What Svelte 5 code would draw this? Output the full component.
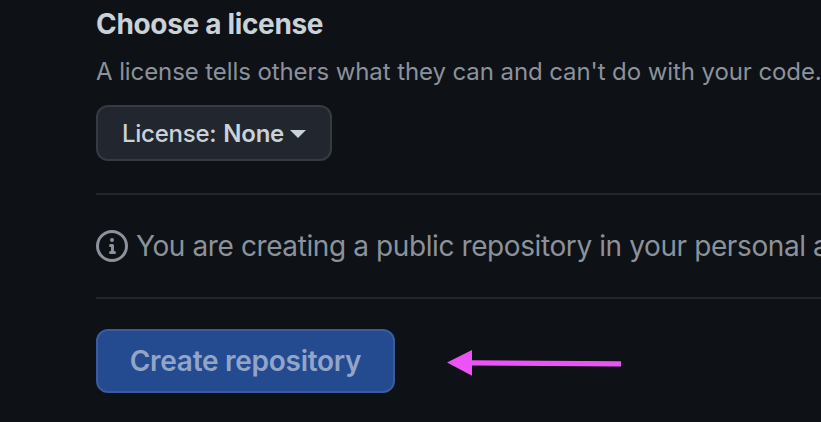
<script>
  const license = 'None';
</script>

<main>
  <section class="license">
    <h2>Choose a license</h2>
    <p class="hint">A license tells others what they can and can't do with your code.</p>
    <button class="select">
      <span class="label">License:</span>
      <span class="value">{license}</span>
      <svg class="caret" width="16" height="8" viewBox="0 0 16 8" aria-hidden="true"><path d="M0 0h16L8 8z" /></svg>
    </button>
  </section>

  <div class="notice">
    <svg width="32" height="32" viewBox="0 0 16 16" aria-hidden="true">
      <path d="M0 8a8 8 0 1 1 16 0A8 8 0 0 1 0 8Zm8-6.5a6.5 6.5 0 1 0 0 13 6.5 6.5 0 0 0 0-13ZM6.5 7.75A.75.75 0 0 1 7.25 7h1a.75.75 0 0 1 .75.75v2.75h.25a.75.75 0 0 1 0 1.5h-2a.75.75 0 0 1 0-1.5h.25v-2h-.25a.75.75 0 0 1-.75-.75ZM8 6a1 1 0 1 1 0-2 1 1 0 0 1 0 2Z" />
    </svg>
    <p>You are creating a public repository in your personal a</p>
  </div>

  <div class="actions">
    <button class="create">Create repository</button>
    <svg class="arrow" width="176" height="28" viewBox="0 0 176 28" aria-hidden="true">
      <path d="M0 13.5 25 1v10.3l149 1v5.2l-149-1v10.3z" />
    </svg>
  </div>
</main>

<style>
  :global(body) {
    background: #0e1116;
    overflow: hidden;
  }
  main {
    box-sizing: border-box;
    width: 821px;
    height: 422px;
    padding-left: 96px;
    overflow: hidden;
    background: #0e1116;
    color: #c9d1d9;
    font-family: Inter, 'Liberation Sans', sans-serif;
    white-space: nowrap;
  }
  h2,
  p {
    margin: 0;
  }
  button {
    display: flex;
    align-items: center;
    box-sizing: border-box;
    margin: 0;
    font-family: inherit;
    color: inherit;
    border-radius: 12px;
  }
  .license {
    height: 193px;
  }
  h2 {
    height: 48px;
    font-size: 28px;
    line-height: 48px;
    font-weight: 700;
    letter-spacing: -0.33px;
  }
  .hint {
    height: 48px;
    color: #8b929b;
    font-size: 24px;
    line-height: 48px;
    letter-spacing: -0.09px;
  }
  .select {
    width: 236px;
    height: 56px;
    margin-top: 9px;
    padding: 0 0 0 24px;
    border: 2px solid #363b42;
    background: #22262e;
    font-size: 24px;
  }
  .label {
    font-weight: 500;
    letter-spacing: -0.25px;
    margin-right: 7px;
  }
  .value {
    font-weight: 600;
    letter-spacing: -0.25px;
    margin-right: 6px;
  }
  .caret {
    margin-top: 1px;
    fill: #c9d1d9;
  }
  .notice {
    display: flex;
    align-items: center;
    gap: 8px;
    box-sizing: border-box;
    height: 106px;
    border: solid #21262c;
    border-width: 2px 0;
    color: #8b929b;
    font-size: 28px;
    letter-spacing: -0.4px;
  }
  .notice svg {
    flex: none;
    fill: #8b929b;
  }
  .actions {
    display: flex;
    align-items: center;
    gap: 52px;
    padding-top: 30px;
  }
  .create {
    justify-content: center;
    width: 299px;
    height: 64px;
    padding: 0;
    border: 2px solid #3a5b9f;
    background: #244a90;
    color: #92a5c9;
    font-size: 28px;
    font-weight: 600;
    letter-spacing: -0.27px;
  }
  .arrow {
    margin-top: 4px;
    fill: #ea54f5;
  }
</style>
